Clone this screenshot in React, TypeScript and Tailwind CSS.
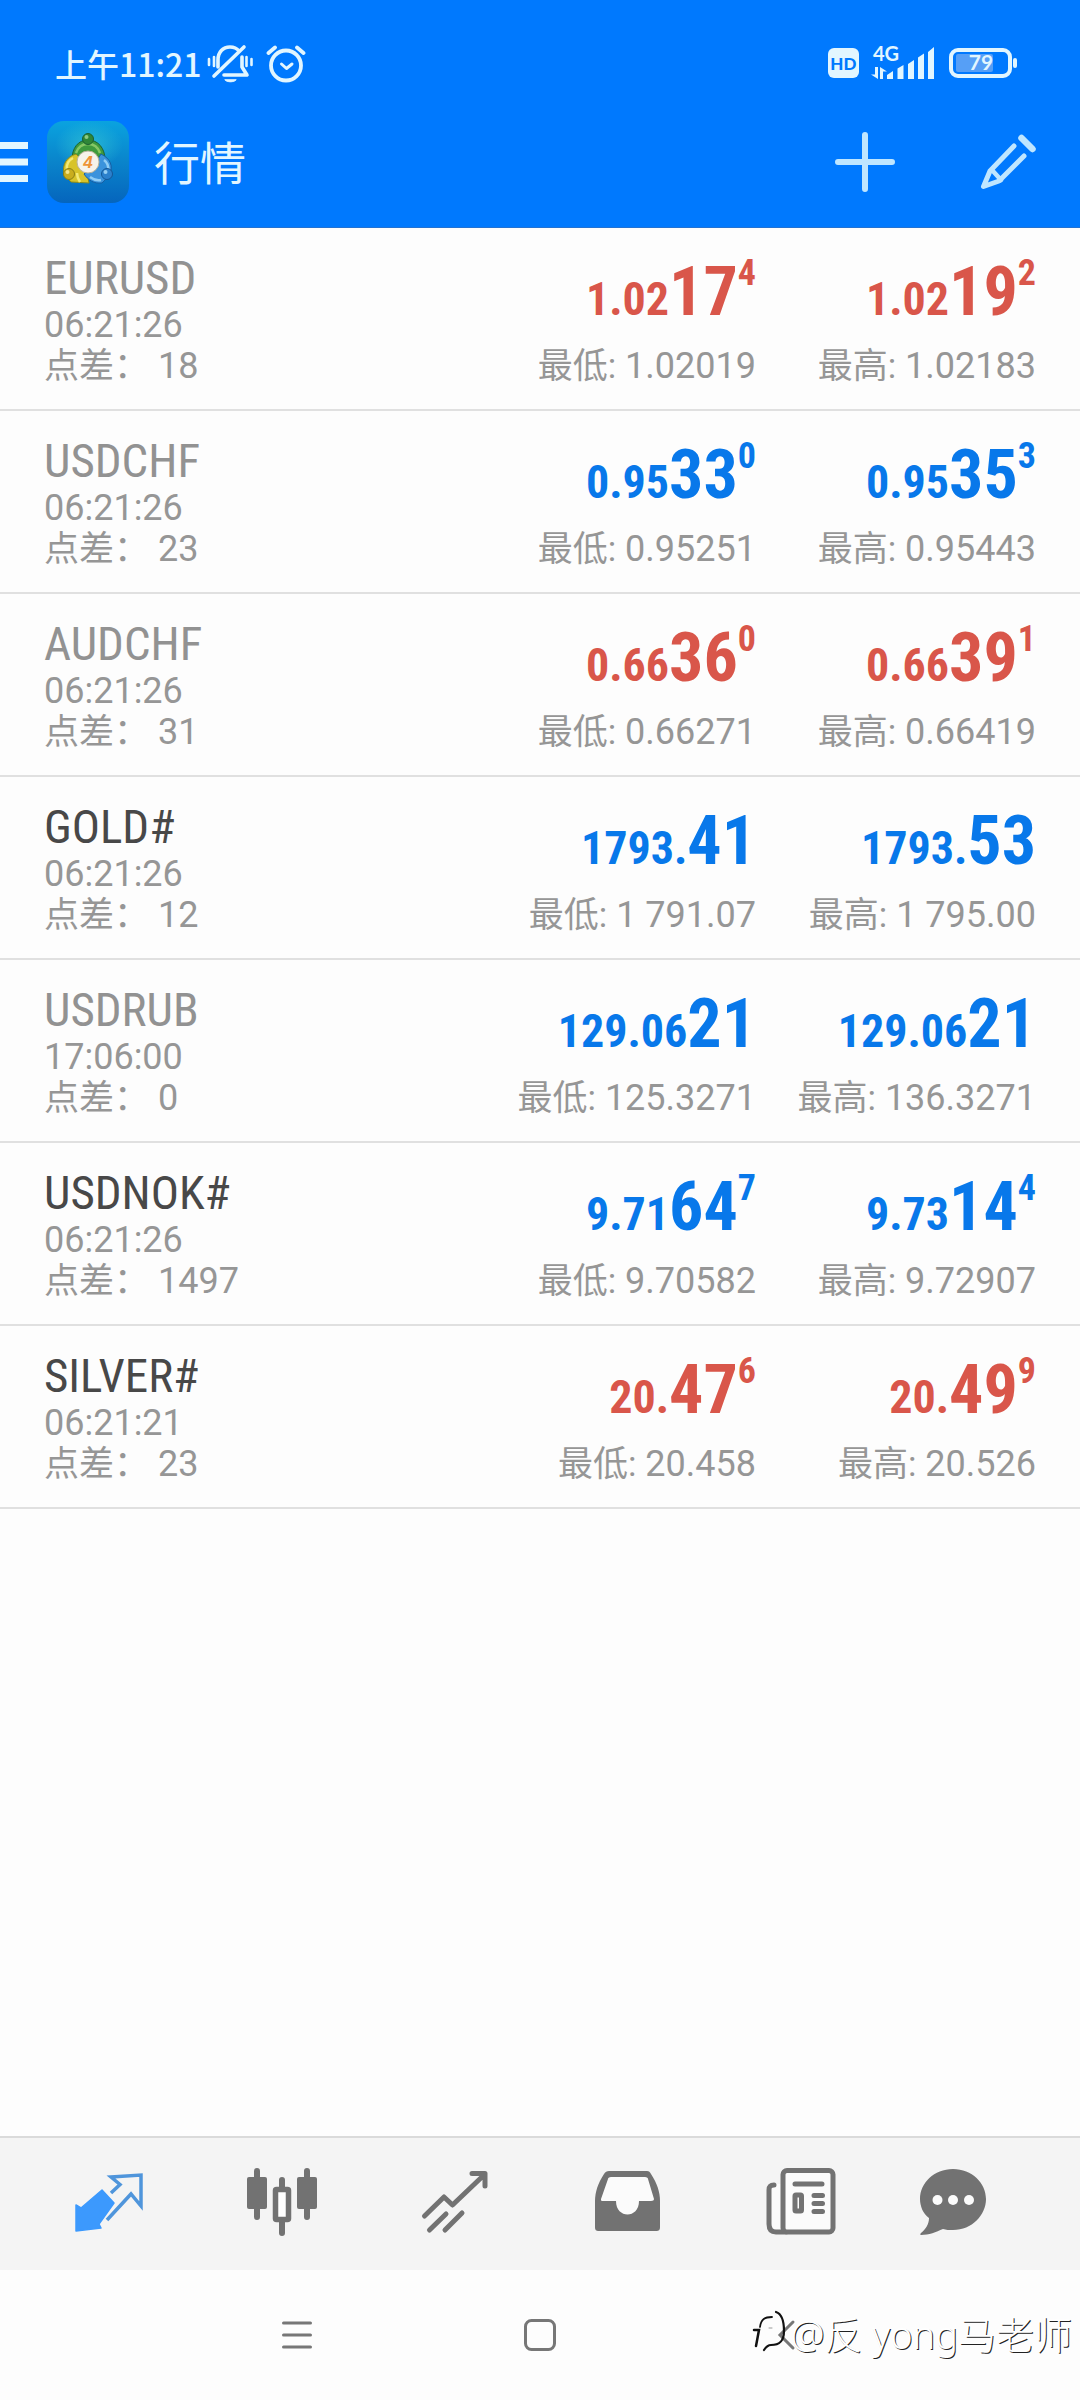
import type { ReactNode } from "react";

type Trend = "up" | "down";

interface Price {
  base: string;
  big: string;
  sup?: string;
}

interface Quote {
  symbol: string;
  active: boolean;
  time: string;
  spread: number;
  trend: Trend;
  bid: Price;
  ask: Price;
  low: string;
  high: string;
}

const QUOTES: Quote[] = [
  {
    symbol: "EURUSD",
    active: false,
    time: "06:21:26",
    spread: 18,
    trend: "down",
    bid: { base: "1.02", big: "17", sup: "4" },
    ask: { base: "1.02", big: "19", sup: "2" },
    low: "1.02019",
    high: "1.02183",
  },
  {
    symbol: "USDCHF",
    active: false,
    time: "06:21:26",
    spread: 23,
    trend: "up",
    bid: { base: "0.95", big: "33", sup: "0" },
    ask: { base: "0.95", big: "35", sup: "3" },
    low: "0.95251",
    high: "0.95443",
  },
  {
    symbol: "AUDCHF",
    active: false,
    time: "06:21:26",
    spread: 31,
    trend: "down",
    bid: { base: "0.66", big: "36", sup: "0" },
    ask: { base: "0.66", big: "39", sup: "1" },
    low: "0.66271",
    high: "0.66419",
  },
  {
    symbol: "GOLD#",
    active: true,
    time: "06:21:26",
    spread: 12,
    trend: "up",
    bid: { base: "1793.", big: "41" },
    ask: { base: "1793.", big: "53" },
    low: "1 791.07",
    high: "1 795.00",
  },
  {
    symbol: "USDRUB",
    active: false,
    time: "17:06:00",
    spread: 0,
    trend: "up",
    bid: { base: "129.06", big: "21" },
    ask: { base: "129.06", big: "21" },
    low: "125.3271",
    high: "136.3271",
  },
  {
    symbol: "USDNOK#",
    active: true,
    time: "06:21:26",
    spread: 1497,
    trend: "up",
    bid: { base: "9.71", big: "64", sup: "7" },
    ask: { base: "9.73", big: "14", sup: "4" },
    low: "9.70582",
    high: "9.72907",
  },
  {
    symbol: "SILVER#",
    active: true,
    time: "06:21:21",
    spread: 23,
    trend: "down",
    bid: { base: "20.", big: "47", sup: "6" },
    ask: { base: "20.", big: "49", sup: "9" },
    low: "20.458",
    high: "20.526",
  },
];

function StatusBar() {
  return (
    <div className="flex h-24 items-center pt-[30px] pl-[55px] pr-[63px] text-[#e2f6ff]">
      <span className="font-['Noto_Sans_CJK_SC',sans-serif] text-[32px] leading-9 font-medium">
        上午11:21
      </span>
      <svg className="ml-1 h-10 w-12" viewBox="0 0 48 40" fill="none" stroke="currentColor" strokeWidth="3.6" strokeLinecap="round" strokeLinejoin="round">
        <path d="M12 24V17C12 9 17 4 24 4c4 0 7 1.500 9 4" />
        <path d="M36 14v10l5 8H18" />
        <path d="M8 33 38 4" />
        <path d="M19 37c2 2.500 9 2.500 11 0z" fill="currentColor" strokeWidth="1" />
        <path d="M3 16v6M8 14v9M40.500 14v9M45.500 16v6" strokeWidth="2.600" />
      </svg>
      <svg className="ml-3 h-10 w-10" viewBox="0 0 40 40" fill="none" stroke="currentColor" strokeLinecap="round" strokeLinejoin="round">
        <circle cx="20" cy="22.500" r="15" strokeWidth="3.800" />
        <path d="m15.500 21 5 4.500 5.500-4.500" strokeWidth="3" />
        <path d="M2.500 10 9 4.500M37.500 10 31 4.500" strokeWidth="3.800" />
      </svg>

      <div className="ml-auto flex items-center">
        <span className="flex h-[30px] w-[31px] items-center justify-center rounded-md bg-[#e2f6ff] font-['Lato',sans-serif] text-[17px] leading-none font-black text-[#0079fe]">
          HD
        </span>
        <div className="ml-3 flex h-10 items-end">
          <div className="flex h-10 flex-col items-start justify-between pb-1">
            <span className="pl-0.5 font-['Lato',sans-serif] text-[20px] leading-5 font-bold">4G</span>
            <svg className="h-3 w-4" viewBox="0 0 16 12" fill="currentColor">
              <path d="M4 0h3v12L0 7.500h4zM9 12h3V4.500h4L9 0z" />
            </svg>
          </div>
          <svg className="-ml-3 mb-1 h-8 w-12" viewBox="0 0 48 32" fill="currentColor">
            <path d="M0 32v-4l6-4v8zM10.500 32V21.500l6-3.500v14zM21 32V17l6-4v19zM31 32V10.500l6-4V32zM41 32V5l6-5v32z" />
          </svg>
        </div>
        <svg className="ml-3.5 h-[30px] w-[68px]" viewBox="0 0 68 30">
          <rect x="7" y="6" width="37" height="18" rx="2" fill="#569ff6" />
          <rect x="2" y="2" width="59" height="26" rx="7" fill="none" stroke="currentColor" strokeWidth="4" />
          <rect x="64" y="10" width="4" height="10" rx="2" fill="currentColor" />
          <text x="32" y="22" textAnchor="middle" fill="currentColor" className="font-['Lato',sans-serif] text-[21px] font-bold">
            79
          </text>
        </svg>
      </div>
    </div>
  );
}

function AppLogo() {
  return (
    <svg className="ml-[19px] h-[82px] w-[82px]" viewBox="0 0 82 82">
      <defs>
        <linearGradient id="logo-bg" x1="0" y1="0" x2="0" y2="1">
          <stop offset="0" stopColor="#0aa3df" />
          <stop offset="0.5" stopColor="#0a84cb" />
          <stop offset="1" stopColor="#0565bd" />
        </linearGradient>
        <radialGradient id="logo-glow">
          <stop offset="0" stopColor="#35c6d3" stopOpacity="0.700" />
          <stop offset="1" stopColor="#35c6d3" stopOpacity="0" />
        </radialGradient>
      </defs>
      <rect width="82" height="82" rx="17" fill="url(#logo-bg)" />
      <ellipse cx="42" cy="24" rx="34" ry="24" fill="url(#logo-glow)" />
      {/* three figures around the badge */}
      <path d="M25 39c0-12 6-20 16-20s17 8 17 20l-7 5H32z" fill="#3f9a3d" stroke="#1c6130" />
      <path d="M29 33c-10 3-14 11-12 20l7 8 18 1-4-20z" fill="#d8c32a" stroke="#8a8a1a" />
      <path d="M54 33c10 5 12 12 9 21l-8 8c-8 1-14-3-18-9l10-9z" fill="#3b93dc" stroke="#1560a4" />
      <path d="M29 32c2-6 6-9 12-9s10 3 12 9" fill="none" stroke="#86c765" strokeWidth="2.500" />
      <path d="M20 49c-1-6 2-10 6-12" fill="none" stroke="#f3e976" strokeWidth="2.500" />
      <path d="M57 39c4 3 5 6 4 11M43 56c4 3 7 4 11 3" fill="none" stroke="#90cdf5" strokeWidth="2.500" />
      <path d="M30 52c0 4 1 6 3 9" fill="none" stroke="#f3e976" strokeWidth="2.500" />
      <circle cx="41" cy="18" r="5.500" fill="#2f8637" stroke="#1c6130" />
      <circle cx="22" cy="53" r="5.500" fill="#c9ad1e" stroke="#8a7f16" />
      <circle cx="60" cy="53" r="5.500" fill="#2c80cc" stroke="#145797" />
      <circle cx="39.500" cy="16" r="2" fill="#8ecb81" />
      <circle cx="20.500" cy="51" r="2" fill="#f2e38a" />
      <circle cx="58.500" cy="51" r="2" fill="#93cdf4" />
      <circle cx="41" cy="41" r="11" fill="#f7f3ea" stroke="#b9b39c" />
      <text x="41" y="47" textAnchor="middle" fill="#ee9437" className="font-['Liberation_Sans',sans-serif] text-[17px] font-bold italic">
        4
      </text>
    </svg>
  );
}

function Header() {
  return (
    <header className="bg-[#0079fe] text-[#e2f6ff]">
      <StatusBar />
      <div className="flex h-[132px] items-center border-b border-[#2372d2] pr-11">
        <button aria-label="菜单">
          <svg className="h-10 w-7" viewBox="0 0 28 40" fill="currentColor">
            <path d="M0 0h28v7H0zM0 16.500h28v7H0zM0 33h28v7H0z" />
          </svg>
        </button>
        <AppLogo />
        <h1 className="ml-[25px] pb-1 font-['Noto_Sans_CJK_SC',sans-serif] text-[46px] leading-none">行情</h1>
        <button aria-label="添加" className="ml-auto">
          <svg className="h-[60px] w-[60px] text-[#bfe6ff]" viewBox="0 0 60 60" stroke="currentColor" strokeWidth="6" strokeLinecap="round">
            <path d="M30 3v54M3 30h54" />
          </svg>
        </button>
        <button aria-label="编辑" className="ml-[85px]">
          <svg className="h-14 w-14 text-[#bfe6ff]" viewBox="0 0 56 56" fill="none" stroke="currentColor" strokeWidth="5" strokeLinecap="round" strokeLinejoin="round">
            <path d="M34 12 10 37 3.500 52.500 19 47 44 22" />
            <path d="m12 36 9 10" strokeWidth="4.500" />
            <path d="m41.500 4 11 11" strokeWidth="6.500" />
          </svg>
        </button>
      </div>
    </header>
  );
}

function PriceCell({ price, label, value }: { price: Price; label: string; value: string }) {
  return (
    <div className="flex w-[280px] flex-col items-end whitespace-nowrap">
      <div className="mb-4 flex h-[75px] items-baseline font-['Roboto_Condensed',sans-serif] font-bold">
        <span className="text-[46px] leading-[74px]">{price.base}</span>
        <span className="text-[68px] leading-[74px]">{price.big}</span>
        {price.sup && <span className="self-start text-[36px] leading-[37px]">{price.sup}</span>}
      </div>
      <p className="text-[36px] leading-[41px] text-[#969696]">
        <span className="text-[35px]">{label}:</span> {value}
      </p>
    </div>
  );
}

function QuoteRow({ quote }: { quote: Quote }) {
  return (
    <li className="flex border-b-2 border-[#e0e0e0] pt-[27px] pr-11 pb-[22px] pl-11">
      <div className="flex-1 whitespace-nowrap text-[#969696]">
        <h2
          className={`mb-1 font-['Roboto_Condensed',sans-serif] text-[47px] leading-[46px] ${
            quote.active ? "text-[#484848]" : "text-[#929292]"
          }`}
        >
          {quote.symbol}
        </h2>
        <p className="text-[36px] leading-[41px]">{quote.time}</p>
        <p className="text-[36px] leading-[41px]">
          <span className="text-[35px]">点差：</span> {quote.spread}
        </p>
      </div>
      <div className={`flex ${quote.trend === "up" ? "text-[#0878ea]" : "text-[#d9564a]"}`}>
        <PriceCell price={quote.bid} label="最低" value={quote.low} />
        <PriceCell price={quote.ask} label="最高" value={quote.high} />
      </div>
    </li>
  );
}

function TabIcon({ children }: { children: ReactNode }) {
  return (
    <svg className="h-[68px] w-[70px]" viewBox="0 0 70 68" fill="none" strokeLinecap="round" strokeLinejoin="round">
      {children}
    </svg>
  );
}

const TABS = [
  {
    label: "行情",
    icon: (
      <TabIcon>
        <path d="M28 22 40 35 25 56 27 60 2 63V37l5 3z" fill="#3c99fd" stroke="#3c99fd" strokeWidth="1.500" />
        <path d="M37 25 46 16.500 37 9 67 7v31l-10-12L33 52" stroke="#4f95db" strokeWidth="3.500" strokeLinejoin="miter" strokeLinecap="butt" />
      </TabIcon>
    ),
  },
  {
    label: "图表",
    icon: (
      <TabIcon>
        <path d="M10 3v46M60 3v46M35 12v9M35 54v11" stroke="#727272" strokeWidth="6" />
        <rect x="0" y="9" width="20" height="32" rx="2" fill="#727272" />
        <rect x="50" y="9" width="20" height="32" rx="2" fill="#727272" />
        <rect x="28.500" y="21.500" width="13" height="30" rx="1" fill="#fff" stroke="#727272" strokeWidth="5.500" />
      </TabIcon>
    ),
  },
  {
    label: "交易",
    icon: (
      <TabIcon>
        <g stroke="#727272" strokeWidth="5">
          <path d="M4.500 48 24 29l8.500 8L64 7M52 5.500h13V18" />
          <path d="M9.500 62 26 46M25 62l17-17" />
        </g>
      </TabIcon>
    ),
  },
  {
    label: "历史",
    icon: (
      <TabIcon>
        <path
          d="M16 3h38c2 0 3 1 4 3 6 9 9 18 9 27v26c0 3-1 4-4 4H6c-3 0-4-1-4-4V33c0-9 3-18 9-27 1-2 3-3 5-3z"
          fill="#727272"
        />
        <path d="M18 9h34c2 0 3 1 3 2l6 20c0 1-1 2-3 2H46c0 18-23 18-23 0H9c-1 0-1-1-1-2l7-20c0-1 1-2 3-2z" fill="#fbfbfb" />
      </TabIcon>
    ),
  },
  {
    label: "新闻",
    icon: (
      <TabIcon>
        <path d="M8 16c-4 0-6 2-6 6v34c0 5 3 8 7 8h10V16z" fill="#fbfbfb" />
        <g stroke="#727272" strokeWidth="5">
          <path d="M8 17c-4 0-5 2-5 5v34c0 5 2 8 7 8h10" />
          <rect x="17" y="2.500" width="50" height="61.500" rx="4" fill="#fbfbfb" />
          <path d="M29 16h27M48 27.500h8.500M48 35.500h8.500M48 43.500h8.500" />
          <rect x="29" y="27" width="6.500" height="16" rx="1" />
        </g>
      </TabIcon>
    ),
  },
];

function TabBar() {
  return (
    <nav className="flex h-[134px] border-t-2 border-[#dadada] bg-[#f4f4f4] pr-[62px] pb-1 pl-[22px]">
      {TABS.map((tab) => (
        <button key={tab.label} aria-label={tab.label} className="flex flex-[4] items-center justify-center">
          {tab.icon}
        </button>
      ))}
      <button aria-label="消息" className="flex flex-[3] items-center justify-center">
        <TabIcon>
          <path
            d="M35 1c19 0 33 14 33 30S54 62 35 62c-4 0-7 0-10-1-7 3-14 6-22 6-1 0-1-1 0-2 5-4 8-9 8-15C5 46 2 38 2 31 2 15 16 1 35 1z"
            fill="#727272"
          />
          <g fill="#fbfbfb">
            <circle cx="19.500" cy="32" r="5" />
            <circle cx="35" cy="32" r="5" />
            <circle cx="51" cy="32" r="5" />
          </g>
        </TabIcon>
      </button>
    </nav>
  );
}

function SystemBar() {
  return (
    <div className="relative flex h-[130px] items-center justify-center gap-[211px] bg-[#fdfdfd] text-[#777]">
      <button aria-label="最近任务">
        <svg className="h-8 w-8" viewBox="0 0 32 32" stroke="currentColor" strokeWidth="3" strokeLinecap="round">
          <path d="M2.500 4h27M2.500 16h27M2.500 28h27" />
        </svg>
      </button>
      <button aria-label="主屏幕">
        <svg className="h-8 w-8" viewBox="0 0 32 32" fill="none" stroke="currentColor" strokeWidth="3">
          <rect x="1.500" y="1.500" width="29" height="29" rx="6" />
        </svg>
      </button>
      <button aria-label="返回">
        <svg className="h-8 w-8" viewBox="0 0 32 32" fill="none" stroke="currentColor" strokeWidth="3" strokeLinecap="round">
          <path d="M26 3 13 16l13 13" />
        </svg>
      </button>
      <div className="absolute top-9 right-2 flex items-center whitespace-nowrap">
        <svg className="h-14 w-10" viewBox="0 0 40 56" fill="none" stroke="#111" strokeWidth="1.800" strokeLinecap="round">
          <path d="M3 24h5L5 40" strokeWidth="2.500" />
          <path d="M9 21c1-8 5-10 12-10" />
          <path d="M25 6c6 2 8 10 8 19 0 11-5 14-13 14-3 0-5 2-7 5" strokeWidth="2.200" />
          <path d="M18 22h3" stroke="#999" strokeWidth="1" />
        </svg>
        <span className="font-['Noto_Sans','Noto_Sans_CJK_SC',sans-serif] text-[38px] leading-[52px] font-light text-white [text-shadow:1px_1px_0_#222]">
          @反 yong马老师
        </span>
      </div>
    </div>
  );
}

export default function App() {
  return (
    <div className="flex min-h-screen flex-col bg-[#fdfdfd] font-['Roboto','Noto_Sans_CJK_SC',sans-serif]">
      <Header />
      <main className="flex-1">
        <ul>
          {QUOTES.map((quote) => (
            <QuoteRow key={quote.symbol} quote={quote} />
          ))}
        </ul>
      </main>
      <TabBar />
      <SystemBar />
    </div>
  );
}
